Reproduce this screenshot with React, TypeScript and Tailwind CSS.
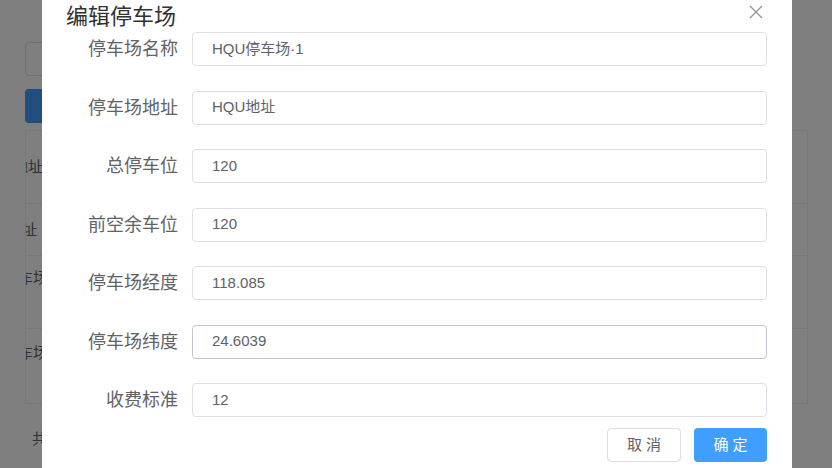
const fields = [
  { label: "停车场名称", value: "HQU停车场·1" },
  { label: "停车场地址", value: "HQU地址" },
  { label: "总停车位", value: "120" },
  { label: "前空余车位", value: "120" },
  { label: "停车场经度", value: "118.085" },
  { label: "停车场纬度", value: "24.6039", hover: true },
  { label: "收费标准", value: "12" },
];

const rows = [
  { h: "h-[73px]", text: "停车场地址", shift: "-ml-[58px]", pt: "pt-[26px]" },
  { h: "h-[52px]", text: "地址", shift: "-ml-[19px]", pt: "pt-[16px]" },
  { h: "h-[73px]", text: "停车场", shift: "-ml-[23px]", pt: "pt-[12px]" },
  { h: "h-[74px]", text: "停车场", shift: "-ml-[23px]", pt: "pt-[14px]" },
];

function Background() {
  return (
    <div className="pl-[25px] pr-[24px] pt-[42px] text-[#606266]">
      {/* search box */}
      <div className="h-[34px] w-[220px] rounded border border-[#dcdfe6] bg-white" />
      {/* add button */}
      <div className="mt-[13px] h-[34px] w-[96px] rounded bg-[#409eff]" />
      {/* table */}
      <div className="mt-[7px] border border-[#ebeef5]">
        {rows.map((r, i) => (
          <div
            key={i}
            className={`${r.h} ${r.pt} overflow-hidden ${i < rows.length - 1 ? "border-b border-[#ebeef5]" : ""}`}
          >
            <div className={`${r.shift} whitespace-nowrap text-[15px] leading-[20px] text-[#606266]`}>
              {r.text}
            </div>
          </div>
        ))}
      </div>
      <div className="mt-[24px] pl-[7px] text-[15px] text-[#606266]">共 4 条</div>
    </div>
  );
}

export default function App() {
  return (
    <div className="relative h-[468px] w-[832px] overflow-hidden bg-white font-['Liberation_Sans','Noto_Sans_CJK_SC',sans-serif]">
      <Background />

      {/* modal mask */}
      <div className="absolute inset-0 bg-black/50" />

      {/* dialog */}
      <div className="absolute left-[42px] top-0 h-[480px] w-[750px] bg-white pl-[24px] pr-[25px] pt-[2px]">
        <div className="flex items-start justify-between">
          <h2 className="text-[22px] leading-[30px] text-[#303133]">编辑停车场</h2>
          <button className="mr-[4px] mt-[3px] h-[14px] w-[14px] text-[#909399]">
            <svg viewBox="0 0 14 14" className="h-[14px] w-[14px]" fill="none" stroke="currentColor" strokeWidth="1.3">
              <path d="M1 1L13 13M13 1L1 13" />
            </svg>
          </button>
        </div>

        <div className="flex flex-col gap-[24.5px]">
          {fields.map((f) => (
            <div key={f.label} className="flex items-center gap-[14px]">
              <label className="w-[112px] text-right text-[18px] leading-[34px] text-[#606266]">
                {f.label}
              </label>
              <div
                className={`flex h-[34px] w-[575px] items-center rounded border bg-white pl-[19px] text-[15px] text-[#606266] ${
                  f.hover ? "border-[#c0c4cc]" : "border-[#dcdfe6]"
                }`}
              >
                {f.value}
              </div>
            </div>
          ))}
        </div>

        <div className="mt-[11px] flex justify-end gap-[13px]">
          <button className="h-[34px] w-[74px] rounded border border-[#dcdfe6] bg-white text-[15px] text-[#606266]">
            取 消
          </button>
          <button className="h-[34px] w-[73px] rounded bg-[#409eff] text-[15px] text-white">
            确 定
          </button>
        </div>
      </div>
    </div>
  );
}
